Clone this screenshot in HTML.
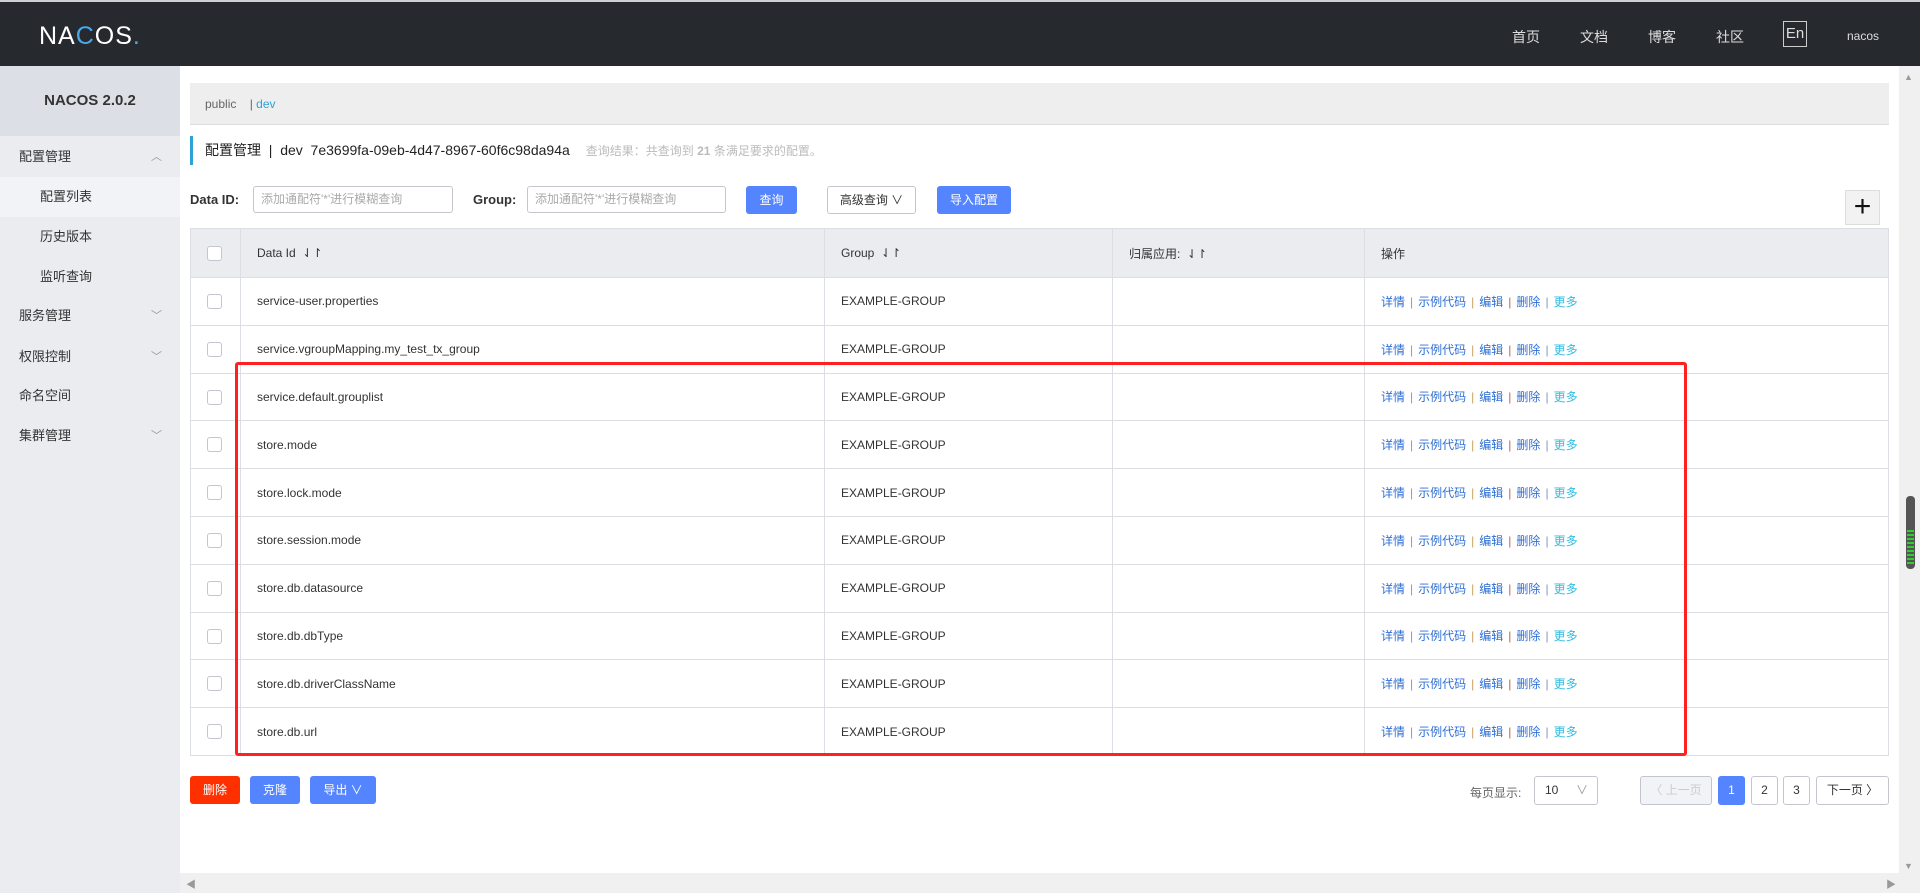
<!DOCTYPE html>
<html><head><meta charset="utf-8">
<style>
*{box-sizing:border-box;margin:0;padding:0}
body{width:1920px;height:893px;overflow:hidden;background:#fff;font-family:"Liberation Sans","Noto Sans CJK SC",sans-serif;position:relative;color:#333}
.hdr{position:absolute;left:0;top:0;width:1920px;height:66px;background:#262a2f;border-top:2px solid #d0d0d0}
.logo{position:absolute;left:39px;top:20px;color:#fff;font-size:25px;font-weight:normal;letter-spacing:1px}
.nav{position:absolute;top:25px;color:#ddd;font-size:14px}
.en{position:absolute;left:1783px;top:19px;width:24px;height:26px;border:1px solid #ccc;color:#ddd;font-size:15px;text-align:center;line-height:24px}
.side{position:absolute;left:0;top:66px;width:180px;height:827px;background:#eaecf0}
.side .t{height:70px;background:#dcdfe5;text-align:center;line-height:70px;font-weight:bold;font-size:15px;color:#333}
.mi{position:absolute;left:0;width:180px;font-size:13px;color:#333;height:40px;line-height:40px;padding-left:19px}
.mi.s{padding-left:40px}
.mi .ar{position:absolute;right:18px;top:0;color:#999;font-size:11px}
.bc{position:absolute;left:190px;top:83px;width:1699px;height:42px;background:#eee;border-bottom:1px solid #ddd;font-size:12px;line-height:42px;padding-left:15px;color:#666}
.ttl{position:absolute;left:190px;top:136px;height:29px;border-left:3px solid #2ea1d6;padding-left:12px;line-height:29px;font-size:14px;color:#222}
.ttl span{color:#bbb;font-size:12px;margin-left:16px}
.lbl{position:absolute;top:192px;font-size:13px;font-weight:bold;color:#333}
.inp{position:absolute;top:186px;height:27px;border:1px solid #c4c6cf;border-radius:3px;font-size:12px;color:#aaa;padding-left:7px;line-height:25px}
.btn{position:absolute;height:28px;border-radius:3px;color:#fff;font-size:12px;text-align:center;line-height:28px;background:#5584ff}
.tbl{position:absolute;left:190px;top:228px;width:1699px;border:1px solid #dcdee3;border-collapse:collapse;font-size:12px}
.tbl td{border-bottom:1px solid #dcdee3;border-left:1px solid #dcdee3;height:47.8px;padding-left:16px;color:#333}
.tbl tr.h td{background:#ebecf0;height:49px}
.cb{display:inline-block;width:15px;height:15px;border:1px solid #c4c6cf;border-radius:3px;background:#fff;vertical-align:middle}
.op a{color:#2f6fd6;text-decoration:none}
.op i{font-style:normal;margin:0 5px;color:#999}
.op .m{color:#33bce0}
.red{position:absolute;left:235px;top:362px;width:1452px;height:394px;border:3px solid #ff2020;border-radius:3px}
.pg{position:absolute;top:776px;height:29px;border:1px solid #c4c6cf;border-radius:3px;font-size:12px;text-align:center;line-height:27px;color:#333;background:#fff}
</style></head><body>
<div class="hdr">
<div class="logo">NA<span style="color:#4aa8e8">C</span>OS<span style="color:#4aa8e8">.</span></div>
<div class="nav" style="left:1512px">首页</div>
<div class="nav" style="left:1580px">文档</div>
<div class="nav" style="left:1648px">博客</div>
<div class="nav" style="left:1716px">社区</div>
<div class="en">En</div>
<div class="nav" style="left:1847px;font-size:12px;top:27px">nacos</div>
</div>
<div class="side"><div class="t">NACOS 2.0.2</div></div>
<div class="mi" style="top:137px">配置管理<span class="ar">︿</span></div>
<div class="mi s" style="top:177px;background:#f2f3f6">配置列表</div>
<div class="mi s" style="top:217px">历史版本</div>
<div class="mi s" style="top:257px">监听查询</div>
<div class="mi" style="top:296px">服务管理<span class="ar">﹀</span></div>
<div class="mi" style="top:337px">权限控制<span class="ar">﹀</span></div>
<div class="mi" style="top:376px">命名空间</div>
<div class="mi" style="top:416px">集群管理<span class="ar">﹀</span></div>

<div class="bc">public &nbsp;&nbsp;&nbsp;| <span style="color:#2ea1d6">dev</span></div>
<div class="ttl">配置管理 &nbsp;|&nbsp; dev &nbsp;7e3699fa-09eb-4d47-8967-60f6c98da94a<span>查询结果：共查询到 <b>21</b> 条满足要求的配置。</span></div>
<div class="lbl" style="left:190px">Data ID:</div>
<div class="inp" style="left:253px;width:200px">添加通配符'*'进行模糊查询</div>
<div class="lbl" style="left:473px">Group:</div>
<div class="inp" style="left:527px;width:199px">添加通配符'*'进行模糊查询</div>
<div class="btn" style="left:746px;top:186px;width:51px">查询</div>
<div class="btn" style="left:827px;top:186px;width:89px;background:#fff;border:1px solid #c4c6cf;color:#333;line-height:26px">高级查询 ∨</div>
<div class="btn" style="left:937px;top:186px;width:74px">导入配置</div>
<div style="position:absolute;left:1845px;top:190px;width:35px;height:35px;border:1px solid #ddd;background:#f2f2f2;text-align:center;line-height:32px;font-size:30px;color:#111">+</div>

<table class="tbl">
<colgroup><col style="width:50px"><col style="width:584px"><col style="width:288px"><col style="width:252px"><col></colgroup>
<tr class="h"><td><span class="cb"></span></td><td>Data Id &nbsp;⇃↾</td><td>Group &nbsp;⇃↾</td><td>归属应用: &nbsp;⇃↾</td><td>操作</td></tr>
<tr><td><span class="cb"></span></td><td>service-user.properties</td><td>EXAMPLE-GROUP</td><td></td><td class="op"><a>详情</a><i>|</i><a>示例代码</a><i style="color:#c8a060">|</i><a>编辑</a><i style="color:#c06050">|</i><a>删除</a><i style="color:#7a9ac0">|</i><a class="m">更多</a></td></tr>
<tr><td><span class="cb"></span></td><td>service.vgroupMapping.my_test_tx_group</td><td>EXAMPLE-GROUP</td><td></td><td class="op"><a>详情</a><i>|</i><a>示例代码</a><i style="color:#c8a060">|</i><a>编辑</a><i style="color:#c06050">|</i><a>删除</a><i style="color:#7a9ac0">|</i><a class="m">更多</a></td></tr>
<tr><td><span class="cb"></span></td><td>service.default.grouplist</td><td>EXAMPLE-GROUP</td><td></td><td class="op"><a>详情</a><i>|</i><a>示例代码</a><i style="color:#c8a060">|</i><a>编辑</a><i style="color:#c06050">|</i><a>删除</a><i style="color:#7a9ac0">|</i><a class="m">更多</a></td></tr>
<tr><td><span class="cb"></span></td><td>store.mode</td><td>EXAMPLE-GROUP</td><td></td><td class="op"><a>详情</a><i>|</i><a>示例代码</a><i style="color:#c8a060">|</i><a>编辑</a><i style="color:#c06050">|</i><a>删除</a><i style="color:#7a9ac0">|</i><a class="m">更多</a></td></tr>
<tr><td><span class="cb"></span></td><td>store.lock.mode</td><td>EXAMPLE-GROUP</td><td></td><td class="op"><a>详情</a><i>|</i><a>示例代码</a><i style="color:#c8a060">|</i><a>编辑</a><i style="color:#c06050">|</i><a>删除</a><i style="color:#7a9ac0">|</i><a class="m">更多</a></td></tr>
<tr><td><span class="cb"></span></td><td>store.session.mode</td><td>EXAMPLE-GROUP</td><td></td><td class="op"><a>详情</a><i>|</i><a>示例代码</a><i style="color:#c8a060">|</i><a>编辑</a><i style="color:#c06050">|</i><a>删除</a><i style="color:#7a9ac0">|</i><a class="m">更多</a></td></tr>
<tr><td><span class="cb"></span></td><td>store.db.datasource</td><td>EXAMPLE-GROUP</td><td></td><td class="op"><a>详情</a><i>|</i><a>示例代码</a><i style="color:#c8a060">|</i><a>编辑</a><i style="color:#c06050">|</i><a>删除</a><i style="color:#7a9ac0">|</i><a class="m">更多</a></td></tr>
<tr><td><span class="cb"></span></td><td>store.db.dbType</td><td>EXAMPLE-GROUP</td><td></td><td class="op"><a>详情</a><i>|</i><a>示例代码</a><i style="color:#c8a060">|</i><a>编辑</a><i style="color:#c06050">|</i><a>删除</a><i style="color:#7a9ac0">|</i><a class="m">更多</a></td></tr>
<tr><td><span class="cb"></span></td><td>store.db.driverClassName</td><td>EXAMPLE-GROUP</td><td></td><td class="op"><a>详情</a><i>|</i><a>示例代码</a><i style="color:#c8a060">|</i><a>编辑</a><i style="color:#c06050">|</i><a>删除</a><i style="color:#7a9ac0">|</i><a class="m">更多</a></td></tr>
<tr><td><span class="cb"></span></td><td>store.db.url</td><td>EXAMPLE-GROUP</td><td></td><td class="op"><a>详情</a><i>|</i><a>示例代码</a><i style="color:#c8a060">|</i><a>编辑</a><i style="color:#c06050">|</i><a>删除</a><i style="color:#7a9ac0">|</i><a class="m">更多</a></td></tr>
</table>
<div class="red"></div>

<div class="btn" style="left:190px;top:776px;width:50px;background:#ff3000">删除</div>
<div class="btn" style="left:250px;top:776px;width:50px">克隆</div>
<div class="btn" style="left:310px;top:776px;width:66px">导出 ∨</div>
<div style="position:absolute;left:1470px;top:784px;font-size:12px;color:#666">每页显示:</div>
<div class="pg" style="left:1534px;width:64px;text-align:left;padding-left:10px">10<span style="position:absolute;right:9px;color:#999">∨</span></div>
<div class="pg" style="left:1640px;width:72px;background:#f2f3f7;color:#ccc">〈 上一页</div>
<div class="pg" style="left:1718px;width:27px;background:#5584ff;border-color:#5584ff;color:#fff">1</div>
<div class="pg" style="left:1751px;width:27px">2</div>
<div class="pg" style="left:1783px;width:27px">3</div>
<div class="pg" style="left:1816px;width:73px">下一页 〉</div>

<div style="position:absolute;left:1899px;top:66px;width:21px;height:807px;background:#f0f0f0"></div>
<div style="position:absolute;left:1904px;top:72px;color:#999;font-size:9px">▲</div>
<div style="position:absolute;left:1904px;top:861px;color:#999;font-size:9px">▼</div>
<div style="position:absolute;left:1906px;top:496px;width:9px;height:73px;background:#555;border-radius:4px"></div>
<div style="position:absolute;left:1907px;top:530px;width:7px;height:34px;background:repeating-linear-gradient(#3c3 0 2px,#555 2px 4px)"></div>
<div style="position:absolute;left:180px;top:873px;width:1740px;height:20px;background:#f0f0f0"></div>
<div style="position:absolute;left:186px;top:876px;color:#999;font-size:10px">◀</div>
<div style="position:absolute;left:1886px;top:876px;color:#999;font-size:10px">▶</div>
</body></html>
